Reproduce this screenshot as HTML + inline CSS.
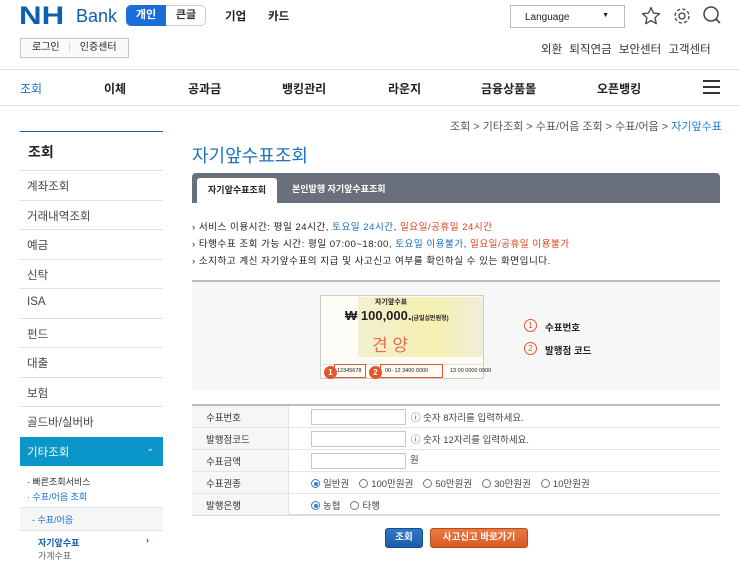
<!DOCTYPE html>
<html><head><meta charset="utf-8"><style>
*{margin:0;padding:0;box-sizing:border-box}
body{width:740px;height:555px;overflow:hidden;background:#fff;font-family:"Liberation Sans","Noto Sans CJK KR",sans-serif;color:#222;position:relative;font-size:11px}
.a{position:absolute;white-space:nowrap}
.side div.it{position:absolute;left:20px;width:143px;height:29.5px;border-bottom:1px solid #dde1e6;font-size:11.5px;color:#444;padding:7px 0 0 7px}
.bul{font-size:9.6px;letter-spacing:0.5px}
.bl{color:#1b6fb8}.rd{color:#e0401b}
.row{position:absolute;left:192px;width:528px;height:22px;border-bottom:1px solid #e2e4e8}
.row .lb{position:absolute;left:0;top:0;width:97px;height:21px;background:#f6f6f7;border-right:1px solid #e2e4e8;font-size:9.5px;padding:4px 0 0 14px;color:#333}
.inp{position:absolute;left:119px;top:3px;width:95px;height:16px;border:1px solid #c8c8c8;background:#fff}
.rad{display:inline-block;width:9px;height:9px;border:1px solid #777;border-radius:50%;vertical-align:-1px;margin-right:3px;position:relative}
.rad.on{border-color:#2a7fd6}.rad.on:after{content:"";position:absolute;left:1.5px;top:1.5px;width:4px;height:4px;border-radius:50%;background:#2a7fd6}
.opts{position:absolute;left:119px;top:4px;font-size:9.5px;color:#444}
.opts span.o{margin-right:10px}
</style></head><body>
<!-- header -->
<div class="a" style="left:19px;top:2px;font-size:25px;font-weight:bold;color:#0e5fb0;transform:scaleX(1.25);transform-origin:left">NH</div>
<div class="a" style="left:76px;top:6px;font-size:18px;color:#0e5fb0">Bank</div>
<div class="a" style="left:126px;top:5px;width:80px;height:21px;border:1px solid #ccc;border-radius:5px;background:#fff"></div>
<div class="a" style="left:126px;top:5px;width:40px;height:21px;border-radius:5px 0 0 5px;background:#1a6ed8;color:#fff;font-size:11px;font-weight:bold;text-align:center;line-height:21px">개인</div>
<div class="a" style="left:166px;top:5px;width:40px;height:21px;font-size:11px;font-weight:bold;text-align:center;line-height:21px;color:#333">큰글</div>
<div class="a" style="left:225px;top:8px;font-size:11.5px;font-weight:bold">기업</div>
<div class="a" style="left:268px;top:8px;font-size:11.5px;font-weight:bold">카드</div>
<div class="a" style="left:510px;top:5px;width:115px;height:23px;border:1px solid #bbb;font-size:10px;padding:6px 0 0 14px">Language<span style="position:absolute;right:15px;top:6px;font-size:7px">▼</span></div>
<svg class="a" style="left:641px;top:6px" width="20" height="20" viewBox="0 0 20 20"><path d="M10 1.5l2.5 5.6 6 .6-4.5 4 1.3 6-5.3-3.1-5.3 3.1 1.3-6-4.5-4 6-.6z" fill="none" stroke="#444" stroke-width="1.3" stroke-linejoin="round"/></svg>
<svg class="a" style="left:672px;top:6px" width="20" height="20" viewBox="0 0 20 20"><circle cx="10" cy="10" r="3" fill="none" stroke="#444" stroke-width="1.3"/><circle cx="10" cy="10" r="7" fill="none" stroke="#444" stroke-width="1.3" stroke-dasharray="3.3 2.2"/></svg>
<svg class="a" style="left:702px;top:5px" width="20" height="20" viewBox="0 0 20 20"><circle cx="9" cy="9" r="7" fill="none" stroke="#444" stroke-width="1.5"/><path d="M14 14l4 4" stroke="#444" stroke-width="1.6"/></svg>
<div class="a" style="left:20px;top:38px;width:109px;height:20px;border:1px solid #c5c5c5;background:#fafafa;font-size:10px;line-height:18px;padding-left:11px">로그인 <span style="color:#ccc;margin:0 6px">|</span> 인증센터</div>
<div class="a" style="left:541px;top:41px;font-size:11.5px;color:#333;word-spacing:4px">외환 퇴직연금 보안센터 고객센터</div>
<div class="a" style="left:0;top:69px;width:740px;height:1px;background:#e3e3e3"></div>
<div class="a" style="left:0;top:105px;width:740px;height:1px;background:#e3e3e3"></div>
<div class="a" style="left:20px;top:80px;font-size:12px;color:#1a6ed8">조회</div>
<div class="a" style="left:104px;top:80px;font-size:12px;font-weight:bold">이체</div>
<div class="a" style="left:188px;top:80px;font-size:12px;font-weight:bold">공과금</div>
<div class="a" style="left:282px;top:80px;font-size:12px;font-weight:bold">뱅킹관리</div>
<div class="a" style="left:388px;top:80px;font-size:12px;font-weight:bold">라운지</div>
<div class="a" style="left:481px;top:80px;font-size:12px;font-weight:bold">금융상품몰</div>
<div class="a" style="left:597px;top:80px;font-size:12px;font-weight:bold">오픈뱅킹</div>
<div class="a" style="left:703px;top:80px;width:17px;height:14px;border-top:2px solid #333;border-bottom:2px solid #333"><div style="margin-top:4px;height:2px;background:#333"></div></div>
<!-- sidebar -->
<div class="side">
<div class="a" style="left:20px;top:131px;width:143px;height:1px;background:#1a5f99"></div>
<div class="a" style="left:28px;top:142px;font-size:14px;font-weight:bold">조회</div>
<div class="a" style="left:20px;top:170px;width:143px;height:1px;background:#dde1e6"></div>
<div class="it" style="top:171px">계좌조회</div>
<div class="it" style="top:200.5px">거래내역조회</div>
<div class="it" style="top:230px">예금</div>
<div class="it" style="top:259.5px">신탁</div>
<div class="it" style="top:289px">ISA</div>
<div class="it" style="top:318.5px">펀드</div>
<div class="it" style="top:348px">대출</div>
<div class="it" style="top:377.5px">보험</div>
<div class="it" style="top:407px;border:none">골드바/실버바</div>
</div>
<div class="a" style="left:20px;top:437px;width:143px;height:29px;background:#0a96c9;color:#fff;font-size:11.5px;padding:7px 0 0 7px">기타조회<span style="position:absolute;right:9px;top:6px;font-size:9px">⌄</span></div>
<div class="a" style="left:27px;top:475px;font-size:9px;color:#333">· 빠른조회서비스</div>
<div class="a" style="left:27px;top:490px;font-size:9px;color:#1a6ed8">· 수표/어음 조회</div>
<div class="a" style="left:20px;top:507px;width:143px;height:1px;background:#e3e3e3"></div>
<div class="a" style="left:20px;top:508px;width:143px;height:22px;background:#f5f6f8"></div>
<div class="a" style="left:32px;top:513px;font-size:9px;color:#1a6ed8">- 수표/어음</div>
<div class="a" style="left:20px;top:530px;width:143px;height:1px;background:#e3e3e3"></div>
<div class="a" style="left:38px;top:536px;font-size:9px;font-weight:bold;color:#1a5fae">자기앞수표</div>
<div class="a" style="left:146px;top:535px;font-size:9px;color:#1a5fae;font-weight:bold">›</div>
<div class="a" style="left:38px;top:549px;font-size:9px;color:#666">가계수표</div>
<!-- main -->
<div class="a" style="left:450px;top:118px;font-size:11px;color:#555">조회 &gt; 기타조회 &gt; 수표/어음 조회 &gt; 수표/어음 &gt; <span style="color:#1a7fd0">자기앞수표</span></div>
<div class="a" style="left:192px;top:142px;font-size:18px;color:#1b72c0">자기앞수표조회</div>
<div class="a" style="left:192px;top:173px;width:528px;height:30px;background:#6a6f7c;border-radius:4px 4px 0 0"></div>
<div class="a" style="left:197px;top:178px;width:80px;height:25px;background:#fff;border-radius:3px 3px 0 0;font-size:9px;font-weight:bold;text-align:center;line-height:24px">자기앞수표조회</div>
<div class="a" style="left:292px;top:182px;font-size:9px;color:#fff;font-weight:bold">본인발행 자기앞수표조회</div>
<div class="a bul" style="left:192px;top:219px">› 서비스 이용시간: 평일 24시간, <span class="bl">토요일 24시간</span>, <span class="rd">일요일/공휴일 24시간</span></div>
<div class="a bul" style="left:192px;top:236px">› 타행수표 조회 가능 시간: 평일 07:00~18:00, <span class="bl">토요일 이용불가</span>, <span class="rd">일요일/공휴일 이용불가</span></div>
<div class="a bul" style="left:192px;top:253px">› 소지하고 계신 자기앞수표의 지급 및 사고신고 여부를 확인하실 수 있는 화면입니다.</div>
<div class="a" style="left:192px;top:280px;width:528px;height:110px;background:#f7f7f8;border-top:2px solid #b8bcc3"></div>
<!-- cheque -->
<div class="a" style="left:320px;top:295px;width:164px;height:84px;background:#fdfcf6;border:1px solid #ccc"></div>
<div class="a" style="left:358px;top:297px;width:125px;height:60px;background:linear-gradient(90deg,#f3f0d0,#f5efb0 60%,#f0eedc)"></div>
<div class="a" style="left:375px;top:297px;font-size:7px;font-weight:bold">자기앞수표</div>
<div class="a" style="left:345px;top:308px;font-size:13px;font-weight:bold">₩ 100,000.<span style="font-size:6px">(금일십만원정)</span></div>
<div class="a" style="left:372px;top:331px;font-size:17px;color:#e26d55">견 양</div>
<div class="a" style="left:322px;top:364px;width:162px;height:1px;background:#ddd"></div>
<div class="a" style="left:324px;top:366px;width:13px;height:13px;border-radius:50%;background:#e0582a;color:#fff;font-size:8px;text-align:center;line-height:13px;font-weight:bold">1</div>
<div class="a" style="left:334px;top:364px;width:32px;height:14px;border:1px solid #e0582a;font-size:5.5px;line-height:12px;padding-left:2px">12345678</div>
<div class="a" style="left:369px;top:366px;width:13px;height:13px;border-radius:50%;background:#e0582a;color:#fff;font-size:8px;text-align:center;line-height:13px;font-weight:bold">2</div>
<div class="a" style="left:380px;top:364px;width:63px;height:14px;border:1px solid #e0582a;font-size:5.5px;line-height:12px;padding-left:4px">00- 12 3400 0000</div>
<div class="a" style="left:450px;top:368px;font-size:5.5px">13 00 0000 0000</div>
<div class="a" style="left:524px;top:319px;width:13px;height:13px;border:1px solid #e0582a;border-radius:50%;color:#e0582a;font-size:8px;text-align:center;line-height:11px">1</div>
<div class="a" style="left:545px;top:320px;font-size:9.5px;font-weight:bold">수표번호</div>
<div class="a" style="left:524px;top:342px;width:13px;height:13px;border:1px solid #e0582a;border-radius:50%;color:#e0582a;font-size:8px;text-align:center;line-height:11px">2</div>
<div class="a" style="left:545px;top:343px;font-size:9.5px;font-weight:bold">발행점 코드</div>
<!-- table -->
<div class="a" style="left:192px;top:404px;width:528px;height:2px;background:#b8bcc3"></div>
<div class="row" style="top:406px"><div class="lb">수표번호</div><div class="inp"></div><div class="opts" style="left:219px;color:#444">ⓘ 숫자 8자리를 입력하세요.</div></div>
<div class="row" style="top:428px"><div class="lb">발행점코드</div><div class="inp"></div><div class="opts" style="left:219px">ⓘ 숫자 12자리를 입력하세요.</div></div>
<div class="row" style="top:450px"><div class="lb">수표금액</div><div class="inp"></div><div class="opts" style="left:218px;top:2px">원</div></div>
<div class="row" style="top:472px"><div class="lb">수표권종</div><div class="opts"><span class="o"><i class="rad on"></i>일반권</span><span class="o"><i class="rad"></i>100만원권</span><span class="o"><i class="rad"></i>50만원권</span><span class="o"><i class="rad"></i>30만원권</span><span class="o"><i class="rad"></i>10만원권</span></div></div>
<div class="row" style="top:494px;border-bottom:2px solid #d8dadf"><div class="lb">발행은행</div><div class="opts"><span class="o"><i class="rad on"></i>농협</span><span class="o"><i class="rad"></i>타행</span></div></div>
<div class="a" style="left:385px;top:528px;width:38px;height:20px;background:linear-gradient(#2f7ac8,#1a5ea6);border:1px solid #174e8a;border-radius:3px;color:#fff;font-size:9.5px;font-weight:bold;text-align:center;line-height:18px">조회</div>
<div class="a" style="left:430px;top:528px;width:98px;height:20px;background:linear-gradient(#ea7a45,#d95a23);border:1px solid #b84a1b;border-radius:3px;color:#fff;font-size:9.5px;font-weight:bold;text-align:center;line-height:18px">사고신고 바로가기</div>
</body></html>
